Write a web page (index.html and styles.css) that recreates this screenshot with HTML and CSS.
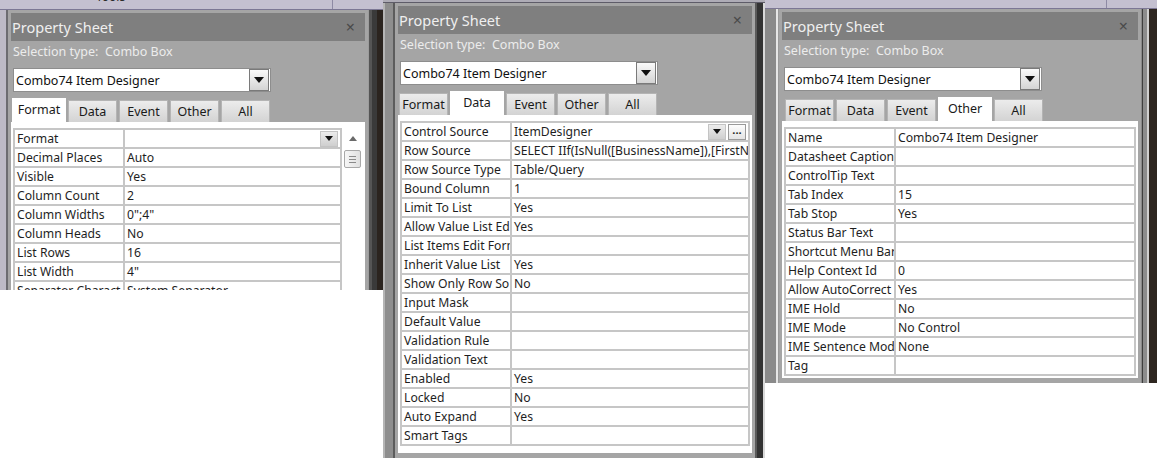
FILE: index.html
```html
<!doctype html>
<html>
  <head>
    <meta charset="utf-8">
    <title>Property Sheet - Combo74 Item Designer</title>
    <link rel="stylesheet" href="styles.css">
  </head>
  <body>
    <div class="desk">

      <!-- Format tab -->
      <div class="shot shot-format">
        <div class="strip"><div class="strip-cell"><span>Tools</span></div></div>
        <div class="shot-body">
          <div class="gutter gutter-l"></div>
          <div class="sheet">
            <div class="sheet-title"><span>Property Sheet</span><span class="close">&times;</span></div>
            <div class="sel-type">Selection type:&nbsp; Combo Box</div>
            <div class="combo"><span>Combo74 Item Designer</span><span class="drop"></span></div>
            <div class="tabs">
              <span class="tab active">Format</span>
              <span class="tab">Data</span>
              <span class="tab">Event</span>
              <span class="tab">Other</span>
              <span class="tab">All</span>
            </div>
            <div class="grid-area">
              <div class="props">
                <div class="cell">Format</div><div class="cell value"><span class="txt"></span><span class="mini-drop"></span></div>
                <div class="cell">Decimal Places</div><div class="cell">Auto</div>
                <div class="cell">Visible</div><div class="cell">Yes</div>
                <div class="cell">Column Count</div><div class="cell">2</div>
                <div class="cell">Column Widths</div><div class="cell">0";4"</div>
                <div class="cell">Column Heads</div><div class="cell">No</div>
                <div class="cell">List Rows</div><div class="cell">16</div>
                <div class="cell">List Width</div><div class="cell">4"</div>
                <div class="cell">Separator Charact</div><div class="cell">System Separator</div>
              </div>
              <div class="vscroll">
                <div class="up"></div>
                <div class="thumb"><div class="grip"></div></div>
              </div>
            </div>
          </div>
          <div class="gutter gutter-r"></div>
        </div>
      </div>

      <!-- Data tab -->
      <div class="shot shot-data">
        <div class="strip"></div>
        <div class="shot-body">
          <div class="gutter gutter-l"></div>
          <div class="sheet">
            <div class="sheet-title"><span>Property Sheet</span><span class="close">&times;</span></div>
            <div class="sel-type">Selection type:&nbsp; Combo Box</div>
            <div class="combo"><span>Combo74 Item Designer</span><span class="drop"></span></div>
            <div class="tabs">
              <span class="tab">Format</span>
              <span class="tab active">Data</span>
              <span class="tab">Event</span>
              <span class="tab">Other</span>
              <span class="tab">All</span>
            </div>
            <div class="grid-area">
              <div class="props">
                <div class="cell">Control Source</div><div class="cell value"><span class="txt">ItemDesigner</span><span class="mini-drop"></span><span class="build">...</span></div>
                <div class="cell">Row Source</div><div class="cell">SELECT IIf(IsNull([BusinessName]),[FirstN</div>
                <div class="cell">Row Source Type</div><div class="cell">Table/Query</div>
                <div class="cell">Bound Column</div><div class="cell">1</div>
                <div class="cell">Limit To List</div><div class="cell">Yes</div>
                <div class="cell">Allow Value List Ed</div><div class="cell">Yes</div>
                <div class="cell">List Items Edit Form</div><div class="cell"></div>
                <div class="cell">Inherit Value List</div><div class="cell">Yes</div>
                <div class="cell">Show Only Row So</div><div class="cell">No</div>
                <div class="cell">Input Mask</div><div class="cell"></div>
                <div class="cell">Default Value</div><div class="cell"></div>
                <div class="cell">Validation Rule</div><div class="cell"></div>
                <div class="cell">Validation Text</div><div class="cell"></div>
                <div class="cell">Enabled</div><div class="cell">Yes</div>
                <div class="cell">Locked</div><div class="cell">No</div>
                <div class="cell">Auto Expand</div><div class="cell">Yes</div>
                <div class="cell">Smart Tags</div><div class="cell"></div>
              </div>
            </div>
          </div>
          <div class="gutter gutter-r"></div>
        </div>
      </div>

      <!-- Other tab -->
      <div class="shot shot-other">
        <div class="strip"><div class="strip-cell"></div></div>
        <div class="shot-body">
          <div class="gutter gutter-l"></div>
          <div class="sheet">
            <div class="sheet-title"><span>Property Sheet</span><span class="close">&times;</span></div>
            <div class="sel-type">Selection type:&nbsp; Combo Box</div>
            <div class="combo"><span>Combo74 Item Designer</span><span class="drop"></span></div>
            <div class="tabs">
              <span class="tab">Format</span>
              <span class="tab">Data</span>
              <span class="tab">Event</span>
              <span class="tab active">Other</span>
              <span class="tab">All</span>
            </div>
            <div class="grid-area">
              <div class="props">
                <div class="cell">Name</div><div class="cell">Combo74 Item Designer</div>
                <div class="cell">Datasheet Caption</div><div class="cell"></div>
                <div class="cell">ControlTip Text</div><div class="cell"></div>
                <div class="cell">Tab Index</div><div class="cell">15</div>
                <div class="cell">Tab Stop</div><div class="cell">Yes</div>
                <div class="cell">Status Bar Text</div><div class="cell"></div>
                <div class="cell">Shortcut Menu Bar</div><div class="cell"></div>
                <div class="cell">Help Context Id</div><div class="cell">0</div>
                <div class="cell">Allow AutoCorrect</div><div class="cell">Yes</div>
                <div class="cell">IME Hold</div><div class="cell">No</div>
                <div class="cell">IME Mode</div><div class="cell">No Control</div>
                <div class="cell">IME Sentence Mod</div><div class="cell">None</div>
                <div class="cell">Tag</div><div class="cell"></div>
              </div>
            </div>
          </div>
          <div class="gutter gutter-r"></div>
        </div>
      </div>

    </div>
  </body>
</html>
```

FILE: styles.css
```css
body {
  margin: 0;
  background: #fff;
  font-family: 'Noto Sans', 'Liberation Sans', sans-serif;
  color: #1e1e1e;
}
.desk {
  display: flex;
  align-items: flex-start;
}

/* one screen capture */
.shot {
  flex: none;
  display: flex;
  flex-direction: column;
  overflow: hidden;
}
.shot-format {
  width: 383px;
  height: 290px;
}
.shot-data {
  width: 382px;
  height: 458px;
}
.shot-other {
  width: 392px;
  height: 383px;
}
.strip {
  flex: none;
  display: flex;
  height: 9px;
  overflow: hidden;
  background: #c4c0d0;
  border-bottom: 1px solid #7c7794;
}
.shot-data .strip {
  height: 2px;
  background: #aeacb6;
  border-bottom-color: #5e5c68;
}
.shot-other .strip {
  height: 8px;
}
.strip-cell {
  width: 333px;
  box-sizing: border-box;
  padding-left: 96px;
  border-right: 1px solid #8e8aa4;
  font-size: 12px;
  line-height: 12px;
  color: #2a2a2a;
}
.shot-other .strip-cell {
  width: 342px;
}
.strip-cell span {
  display: block;
  margin-top: -9px;
}
.shot-body {
  flex: 1;
  display: flex;
  min-height: 0;
}
.gutter {
  flex: none;
}
.gutter-r {
  flex: 1;
}
.shot-format .gutter-l {
  width: 8px;
  background: linear-gradient(to right, #bdbac6 0 6px, #6c6c70 6px 8px);
}
.shot-format .gutter-r {
  background: linear-gradient(to right, #9c9c9c 0 1px, #555 1px 4px, #3a3a3a 4px 9px, #2b241f 9px);
}
.shot-data .gutter-l {
  width: 12px;
  background: linear-gradient(to right, #b5b5b5 0 2px, #8e8e8e 2px 10px, #5c5c5c 10px 12px);
}
.shot-data .gutter-r {
  background: linear-gradient(to right, #5a5a5a 0 2px, #333 2px 8px, #d9d9d9 8px);
}
.shot-other .gutter-l {
  width: 14px;
  background: linear-gradient(to right, #8a8a8a 0 11px, #e6e6e6 11px 13px, #9a9a9a 13px);
}
.shot-other .gutter-r {
  background: linear-gradient(to right, #8a8a8a 0 1px, #3e3e3e 1px 2px, #8c8c8c 2px 6px, #d0d0d0 6px 8px, #2e2620 8px);
}

/* property sheet pane */
.sheet {
  flex: none;
  width: 360px;
  box-sizing: border-box;
  padding: 3px 3px 5px;
  background: #a5a5a5;
  display: flex;
  flex-direction: column;
}
.shot-other .sheet {
  width: 362px;
}
.sheet-title {
  flex: none;
  height: 28px;
  display: flex;
  align-items: center;
  justify-content: space-between;
  padding: 0 10px 0 1px;
  background: #7f7f7f;
  color: #efefef;
  font-size: 14.5px;
}
.close {
  color: #4a4a4a;
  font-size: 16px;
}
.sel-type {
  flex: none;
  height: 22px;
  line-height: 22px;
  padding-left: 2px;
  font-size: 12.5px;
  color: #ececec;
}
.combo {
  flex: none;
  margin: 5px 0 0 2px;
  width: 258px;
  height: 24px;
  box-sizing: border-box;
  display: flex;
  align-items: center;
  justify-content: space-between;
  padding: 0 1px 0 2px;
  background: #fff;
  border: 1px solid #8d8d8d;
  font-size: 12.5px;
  color: #111;
}
.drop {
  width: 20px;
  height: 22px;
  box-sizing: border-box;
  display: flex;
  align-items: center;
  justify-content: center;
  border: 1px solid #7a7a7a;
  background: linear-gradient(#fafafa, #d4d4d4);
}
.drop::after,
.mini-drop::after {
  content: "";
  border-left: 5px solid transparent;
  border-right: 5px solid transparent;
  border-top: 6px solid #111;
}
.tabs {
  flex: none;
  margin-top: 6px;
  height: 24px;
  display: flex;
  align-items: flex-end;
  gap: 2px;
  padding-left: 1px;
}
.shot-other .tabs {
  padding-left: 3px;
}
.tab {
  width: 49px;
  height: 22px;
  box-sizing: border-box;
  border: 1px solid #b4b4b4;
  border-bottom: 0;
  background: linear-gradient(#ececec, #d3d3d3);
  text-align: center;
  line-height: 22px;
  font-size: 12.5px;
  color: #1a1a1a;
}
.tab.active {
  width: 54px;
  height: 24px;
  background: #fff;
  border-color: #fff;
  line-height: 21px;
}

/* property grid */
.grid-area {
  flex: 1;
  display: flex;
  align-items: flex-start;
  padding: 6px 2px 2px;
  background: #fff;
}
.props {
  flex: 1;
  display: grid;
  grid-template-columns: 108px 1fr;
  gap: 2px;
  padding: 2px;
  background: #c6c6c6;
}
.cell {
  height: 17px;
  line-height: 17px;
  padding-left: 2px;
  background: #fff;
  font-size: 12.2px;
  white-space: nowrap;
  overflow: hidden;
  color: #1e1e1e;
}
.cell.value {
  display: flex;
  align-items: center;
  gap: 2px;
  padding-right: 2px;
}
.txt {
  flex: 1;
}
.mini-drop {
  width: 18px;
  height: 16px;
  box-sizing: border-box;
  display: flex;
  align-items: center;
  justify-content: center;
  border: 1px solid #c4c4c4;
  background: linear-gradient(#ececec, #cfcfcf);
}
.mini-drop::after {
  border-left-width: 4px;
  border-right-width: 4px;
  border-top-width: 5px;
}
.build {
  width: 18px;
  height: 16px;
  box-sizing: border-box;
  border: 1px solid #9a9a9a;
  background: linear-gradient(#fdfdfd, #e4e4e4);
  text-align: center;
  line-height: 9px;
  font-size: 11px;
  font-weight: bold;
  color: #222;
}
.vscroll {
  flex: none;
  width: 21px;
}
.up {
  height: 20px;
  display: flex;
  align-items: center;
  justify-content: center;
}
.up::after {
  content: "";
  border-left: 4px solid transparent;
  border-right: 4px solid transparent;
  border-bottom: 5px solid #6a6a6a;
}
.thumb {
  margin: 2px 0 0 2px;
  width: 17px;
  height: 18px;
  box-sizing: border-box;
  display: flex;
  align-items: center;
  justify-content: center;
  border: 1px solid #a8a8a8;
  border-radius: 2px;
  background: linear-gradient(to right, #f6f6f6, #e0e0e0);
}
.grip {
  width: 7px;
  height: 5px;
  border-top: 1px solid #8a8a8a;
  border-bottom: 1px solid #8a8a8a;
  background: linear-gradient(#8a8a8a, #8a8a8a) center / 100% 1px no-repeat;
}
```
